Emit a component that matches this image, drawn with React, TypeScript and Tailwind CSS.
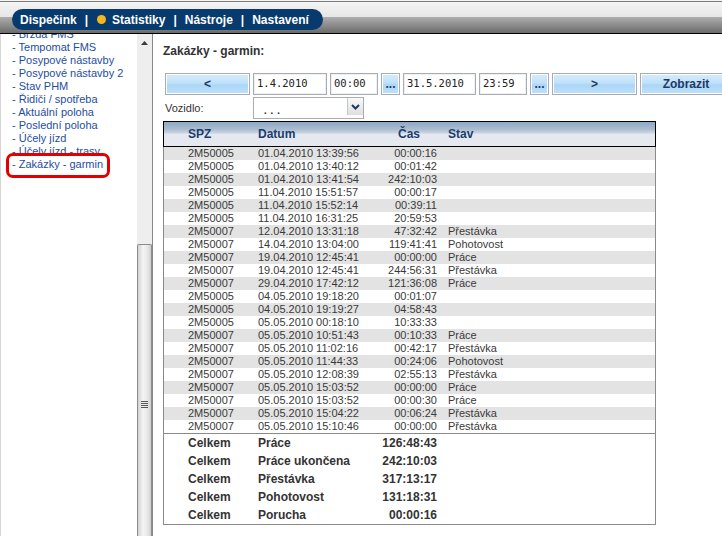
import React from 'react';

const menu = [
  'Brzda FMS',
  'Tempomat FMS',
  'Posypové nástavby',
  'Posypové nástavby 2',
  'Stav PHM',
  'Řidiči / spotřeba',
  'Aktuální poloha',
  'Poslední poloha',
  'Účely jízd',
  'Účely jízd - trasy',
];

const rows: [string, string, string, string][] = [
  ['2M50005', '01.04.2010 13:39:56', '00:00:16', ''],
  ['2M50005', '01.04.2010 13:40:12', '00:01:42', ''],
  ['2M50005', '01.04.2010 13:41:54', '242:10:03', ''],
  ['2M50005', '11.04.2010 15:51:57', '00:00:17', ''],
  ['2M50005', '11.04.2010 15:52:14', '00:39:11', ''],
  ['2M50005', '11.04.2010 16:31:25', '20:59:53', ''],
  ['2M50007', '12.04.2010 13:31:18', '47:32:42', 'Přestávka'],
  ['2M50007', '14.04.2010 13:04:00', '119:41:41', 'Pohotovost'],
  ['2M50007', '19.04.2010 12:45:41', '00:00:00', 'Práce'],
  ['2M50007', '19.04.2010 12:45:41', '244:56:31', 'Přestávka'],
  ['2M50007', '29.04.2010 17:42:12', '121:36:08', 'Práce'],
  ['2M50005', '04.05.2010 19:18:20', '00:01:07', ''],
  ['2M50005', '04.05.2010 19:19:27', '04:58:43', ''],
  ['2M50005', '05.05.2010 00:18:10', '10:33:33', ''],
  ['2M50007', '05.05.2010 10:51:43', '00:10:33', 'Práce'],
  ['2M50007', '05.05.2010 11:02:16', '00:42:17', 'Přestávka'],
  ['2M50007', '05.05.2010 11:44:33', '00:24:06', 'Pohotovost'],
  ['2M50007', '05.05.2010 12:08:39', '02:55:13', 'Přestávka'],
  ['2M50007', '05.05.2010 15:03:52', '00:00:00', 'Práce'],
  ['2M50007', '05.05.2010 15:03:52', '00:00:30', 'Práce'],
  ['2M50007', '05.05.2010 15:04:22', '00:06:24', 'Přestávka'],
  ['2M50007', '05.05.2010 15:10:46', '00:00:00', 'Přestávka'],
];

const totals: [string, string][] = [
  ['Práce', '126:48:43'],
  ['Práce ukončena', '242:10:03'],
  ['Přestávka', '317:13:17'],
  ['Pohotovost', '131:18:31'],
  ['Porucha', '00:00:16'],
];

function BlueButton({ className, children }: { className: string; children: React.ReactNode }) {
  return (
    <div className={`${className} h-[22px] shrink-0 border border-[#a8adb5] bg-white p-px`}>
      <div className="flex h-full items-center justify-center bg-[linear-gradient(to_bottom,#d3ebfc_0%,#bfe1fa_45%,#abd6f6_55%,#bde0f9_100%)] text-[12px] font-bold text-[#1c3a68]">
        {children}
      </div>
    </div>
  );
}

function Field({ className, value }: { className: string; value: string }) {
  return (
    <div className={`${className} flex h-[22px] shrink-0 items-center border border-[#a8adb5] bg-white pl-[3px] font-['DejaVu_Sans_Mono',monospace] text-[10.5px] text-[#222] shadow-[inset_0_0_0_1px_#eef0f3]`}>
      {value}
    </div>
  );
}

function NavSep() {
  return <span className="mx-[8px]">|</span>;
}

export default function App() {
  return (
    <div className="flex h-[536px] w-[722px] flex-col overflow-hidden bg-white font-['Liberation_Sans',Arial,sans-serif]">
      {/* horní lišta */}
      <div className="h-[34px] shrink-0 bg-[#f6f6f6] pt-px">
        <div className="h-[33px] border-t border-b border-t-[#7c7c7c] border-b-black bg-[linear-gradient(to_bottom,#f5f5f5_0%,#e6e6e6_47%,#acacac_50%,#6b6b6b_100%)]">
          <div className="ml-[12px] mt-[7px] flex h-[21px] w-[311px] items-center rounded-full bg-[#073a6d] pl-[8px] text-[12px] font-bold text-white">
            <span>Dispečink</span>
            <NavSep />
            <span className="mr-[6px] ml-[1px] h-[9px] w-[9px] rounded-full bg-[#f4b71c]"></span>
            <span>Statistiky</span>
            <NavSep />
            <span>Nástroje</span>
            <NavSep />
            <span>Nastavení</span>
          </div>
        </div>
      </div>

      <div className="flex min-h-0 flex-1">
        {/* levé menu */}
        <div className="w-[137px] shrink-0 overflow-hidden border-l border-[#d6d6d6]">
          <ul className="-mt-[6px] text-[11px] leading-[13px] text-[#1e4ea0]">
            {menu.map((m) => (
              <li key={m} className="pl-[11px] whitespace-nowrap">- {m}</li>
            ))}
            <li className="relative pl-[11px] whitespace-nowrap">
              <span className="absolute left-[5px] top-[-5px] h-[25px] w-[104px] rounded-[7px] border-[3px] border-[#e20000] bg-white"></span>
              <span className="relative">- Zakázky - garmin</span>
            </li>
          </ul>
        </div>

        {/* posuvník */}
        <div className="flex w-[15px] shrink-0 flex-col bg-[#eeeeee]">
          <div className="flex h-[18px] items-center justify-center">
            <svg width="7" height="4" viewBox="0 0 7 4">
              <path d="M3.5 0 L7 4 L0 4 Z" fill="#3a3a3a" />
            </svg>
          </div>
          <div className="h-[192px]"></div>
          <div className="flex flex-1 flex-col items-center rounded-t-[2px] border border-b-0 border-[#8d8d8d] bg-[linear-gradient(to_right,#d2d2d2_0%,#f5f5f5_40%,#e6e6e6_75%,#cfcfcf_100%)] pt-[156px]">
            <div className="flex flex-col gap-px">
              <div className="h-px w-[7px] bg-[#555]"></div>
              <div className="h-px w-[7px] bg-[#555]"></div>
              <div className="h-px w-[7px] bg-[#555]"></div>
              <div className="h-px w-[7px] bg-[#555]"></div>
            </div>
          </div>
        </div>
        <div className="w-px shrink-0 bg-[#8a8a8a]"></div>

        {/* obsah */}
        <div className="min-w-0 flex-1 pl-[10px] pt-[10px] text-[#333]">
          <div className="text-[12px] font-bold leading-[14px]">Zakázky - garmin:</div>

          <div className="ml-[2px] mt-[15px] flex gap-[3px]">
            <BlueButton className="w-[85px]">&lt;</BlueButton>
            <Field className="w-[74px]" value="1.4.2010" />
            <Field className="w-[48px]" value="00:00" />
            <BlueButton className="w-[19px]">...</BlueButton>
            <Field className="w-[73px]" value="31.5.2010" />
            <Field className="w-[48px]" value="23:59" />
            <BlueButton className="w-[19px]">...</BlueButton>
            <BlueButton className="w-[85px]">&gt;</BlueButton>
            <BlueButton className="w-[92px]">Zobrazit</BlueButton>
          </div>

          <div className="ml-[2px] mt-[2px] flex h-[22px] items-center">
            <div className="w-[88px] text-[11px]">Vozidlo:</div>
            <div className="flex h-[22px] w-[111px] border border-[#a8adb5] bg-white">
              <div className="flex-1 pl-[8px] pt-[6px] font-['DejaVu_Sans_Mono',monospace] text-[11px] leading-[14px] text-[#222]">...</div>
              <div className="mb-[3px] flex w-[16px] items-center justify-center border-l border-[#c4c8ce] bg-[linear-gradient(to_bottom,#fafafa,#dedede)]">
                <svg width="9" height="6" viewBox="0 0 9 6">
                  <path d="M1 1 L4.5 4.5 L8 1" fill="none" stroke="#1c3a68" strokeWidth="2" />
                </svg>
              </div>
            </div>
          </div>

          {/* tabulka */}
          <div className="mt-[2px] w-[493px]">
            <div className="flex h-[26px] items-center border border-black bg-[linear-gradient(to_bottom,#8ea8c3_0%,#a9bcd0_30%,#c9d4e0_45%,#e5e9ef_52%,#e5e9ef_100%)] pl-[24px] text-[12px] font-bold text-[#1b3c6e]">
              <div className="w-[70px]">SPZ</div>
              <div className="w-[140px]">Datum</div>
              <div className="w-[50px]">Čas</div>
              <div>Stav</div>
            </div>
            <div className="border-x border-b border-[#8a8a8a]">
              {rows.map((r, i) => (
                <div
                  key={i}
                  className={`flex h-[13px] pl-[24px] text-[11px] leading-[13px] text-[#3a3a3a] ${i % 2 === 0 ? 'bg-[#e3e3e3]' : 'bg-white'}`}
                >
                  <div className="w-[70px]">{r[0]}</div>
                  <div className="w-[105px]">{r[1]}</div>
                  <div className="w-[74px] text-right">{r[2]}</div>
                  <div className="pl-[11px]">{r[3]}</div>
                </div>
              ))}
              <div className="border-t border-[#8a8a8a]">
                {totals.map((t) => (
                  <div key={t[0]} className="flex h-[18px] items-center pl-[24px] text-[12px] font-bold text-[#333]">
                    <div className="w-[70px]">Celkem</div>
                    <div className="w-[105px]">{t[0]}</div>
                    <div className="w-[74px] text-right">{t[1]}</div>
                  </div>
                ))}
              </div>
            </div>
          </div>
        </div>
      </div>
    </div>
  );
}
